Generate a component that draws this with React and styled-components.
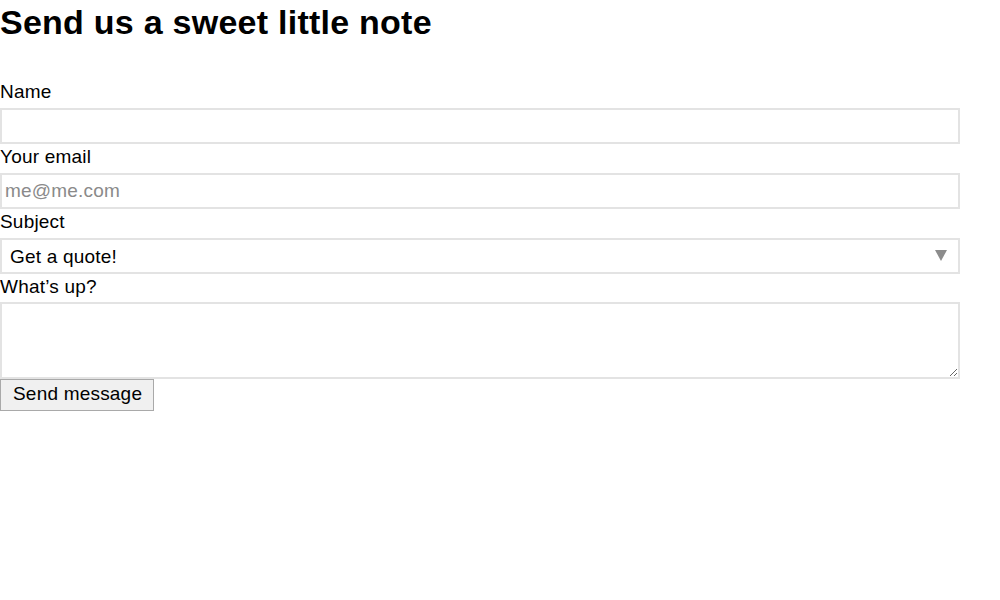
import React from "react";
import styled, { createGlobalStyle } from "styled-components";

const Global = createGlobalStyle`
  body {
    margin: 0;
    background: #fff;
    font-family: "Liberation Sans", Arial, sans-serif;
    color: #000;
  }
`;

const Form = styled.form`
  width: 960px;
  display: flex;
  flex-direction: column;
  align-items: flex-start;
`;

const Title = styled.h1`
  font-size: 34px;
  letter-spacing: 0.25px;
  font-weight: bold;
  line-height: 44px;
  margin: 0 0 35px;
`;

const Label = styled.label`
  display: block;
  font-size: 19px;
  letter-spacing: 0.2px;
  line-height: 25px;
  height: 25px;
  margin-bottom: ${(p) => (p.$tight ? 3 : 4)}px;
`;

const fieldBase = `
  box-sizing: border-box;
  display: block;
  width: 960px;
  border: 2px solid #e3e3e3;
  border-radius: 0;
  background: #fff;
  font-family: "Liberation Sans", Arial, sans-serif;
  font-size: 19px;
  letter-spacing: 0.2px;
  color: #000;
  outline: none;
  margin: 0;
`;

const Input = styled.input`
  ${fieldBase}
  height: 36px;
  padding: 0 3px;
  &::placeholder {
    color: #8a8a8a;
  }
`;

const SelectWrap = styled.div`
  position: relative;
  width: 960px;
  &::after {
    content: "";
    position: absolute;
    right: 13px;
    top: 12px;
    border-left: 6px solid transparent;
    border-right: 6px solid transparent;
    border-top: 11px solid #8c8c8c;
    pointer-events: none;
  }
`;

const Select = styled.select`
  ${fieldBase}
  height: 36px;
  padding: 0 8px;
  appearance: none;
  -webkit-appearance: none;
`;

const TextArea = styled.textarea`
  ${fieldBase}
  height: 77px;
  padding: 4px;
  resize: both;
`;

const Button = styled.button`
  box-sizing: border-box;
  width: 154px;
  height: 32px;
  margin: 0;
  padding: 0 0 2px 12px;
  white-space: nowrap;
  border: 1px solid #a9a9a9;
  border-radius: 0;
  background: #f0f0f0;
  font-family: "Liberation Sans", Arial, sans-serif;
  font-size: 19px;
  letter-spacing: 0.2px;
  color: #000;
  text-align: left;
`;

const Row = styled.div`
  display: block;
`;

export default function App() {
  return (
    <>
      <Global />
      <Form onSubmit={(e) => e.preventDefault()}>
        <Title>Send us a sweet little note</Title>
        <Row>
          <Label htmlFor="name">Name</Label>
          <Input id="name" type="text" />
        </Row>
        <Row>
          <Label htmlFor="email">Your email</Label>
          <Input id="email" type="email" placeholder="me@me.com" />
        </Row>
        <Row>
          <Label htmlFor="subject">Subject</Label>
          <SelectWrap>
            <Select id="subject" defaultValue="quote">
              <option value="quote">Get a quote!</option>
              <option value="hello">Just saying hi</option>
            </Select>
          </SelectWrap>
        </Row>
        <Row>
          <Label htmlFor="msg" $tight>
            What’s up?
          </Label>
          <TextArea id="msg" />
        </Row>
        <Button type="submit">Send message</Button>
      </Form>
    </>
  );
}
